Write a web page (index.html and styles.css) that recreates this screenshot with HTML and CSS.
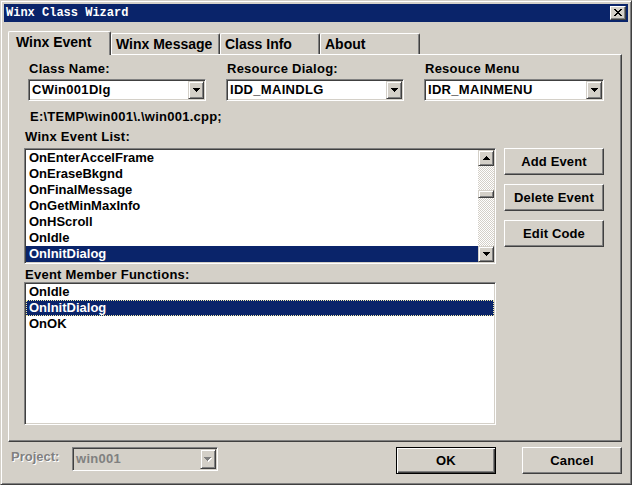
FILE: index.html
```html
<!DOCTYPE html>
<html>
<head>
<meta charset="utf-8">
<title>Winx Class Wizard</title>
<link rel="stylesheet" href="styles.css">
</head>
<body>
<div class="window">
  <div class="titlebar">
    <span class="title">Winx Class Wizard</span>
    <div class="close">
      <svg width="8" height="7" viewBox="0 0 8 7" shape-rendering="crispEdges"><g fill="#000"><rect x="0" y="0" width="2" height="1"/><rect x="6" y="0" width="2" height="1"/><rect x="1" y="1" width="2" height="1"/><rect x="5" y="1" width="2" height="1"/><rect x="2" y="2" width="4" height="1"/><rect x="3" y="3" width="2" height="1"/><rect x="2" y="4" width="4" height="1"/><rect x="1" y="5" width="2" height="1"/><rect x="5" y="5" width="2" height="1"/><rect x="0" y="6" width="2" height="1"/><rect x="6" y="6" width="2" height="1"/></g></svg>
    </div>
  </div>
  <div class="client">
    <div class="tabs">
      <div class="tab tab-event active">Winx Event</div>
      <div class="tab tab-message">Winx Message</div>
      <div class="tab tab-info">Class Info</div>
      <div class="tab tab-about">About</div>
    </div>
    <div class="panel">
      <div class="combos">
        <div class="group">
          <div class="label">Class Name:</div>
          <div class="combo"><span class="combo-text">CWin001Dlg</span><span class="drop"><svg width="7" height="4" viewBox="0 0 7 4" shape-rendering="crispEdges"><g fill="#000"><rect x="0" y="0" width="7" height="1"/><rect x="1" y="1" width="5" height="1"/><rect x="2" y="2" width="3" height="1"/><rect x="3" y="3" width="1" height="1"/></g></svg></span></div>
        </div>
        <div class="group">
          <div class="label">Resource Dialog:</div>
          <div class="combo"><span class="combo-text">IDD_MAINDLG</span><span class="drop"><svg width="7" height="4" viewBox="0 0 7 4" shape-rendering="crispEdges"><g fill="#000"><rect x="0" y="0" width="7" height="1"/><rect x="1" y="1" width="5" height="1"/><rect x="2" y="2" width="3" height="1"/><rect x="3" y="3" width="1" height="1"/></g></svg></span></div>
        </div>
        <div class="group">
          <div class="label">Resouce Menu</div>
          <div class="combo"><span class="combo-text">IDR_MAINMENU</span><span class="drop"><svg width="7" height="4" viewBox="0 0 7 4" shape-rendering="crispEdges"><g fill="#000"><rect x="0" y="0" width="7" height="1"/><rect x="1" y="1" width="5" height="1"/><rect x="2" y="2" width="3" height="1"/><rect x="3" y="3" width="1" height="1"/></g></svg></span></div>
        </div>
      </div>
      <div class="path">E:\TEMP\win001\.\win001.cpp;</div>
      <div class="main">
        <div class="lists">
          <div class="label list-label">Winx Event List:</div>
          <div class="listbox list-events">
            <div class="items">
              <div class="item">OnEnterAccelFrame</div>
              <div class="item">OnEraseBkgnd</div>
              <div class="item">OnFinalMessage</div>
              <div class="item">OnGetMinMaxInfo</div>
              <div class="item">OnHScroll</div>
              <div class="item">OnIdle</div>
              <div class="item selected">OnInitDialog</div>
            </div>
            <div class="vscroll">
              <div class="sbtn"><svg width="7" height="4" viewBox="0 0 7 4" shape-rendering="crispEdges"><g fill="#000"><rect x="3" y="0" width="1" height="1"/><rect x="2" y="1" width="3" height="1"/><rect x="1" y="2" width="5" height="1"/><rect x="0" y="3" width="7" height="1"/></g></svg></div>
              <div class="track"><div class="thumb"></div></div>
              <div class="sbtn"><svg width="7" height="4" viewBox="0 0 7 4" shape-rendering="crispEdges"><g fill="#000"><rect x="0" y="0" width="7" height="1"/><rect x="1" y="1" width="5" height="1"/><rect x="2" y="2" width="3" height="1"/><rect x="3" y="3" width="1" height="1"/></g></svg></div>
            </div>
          </div>
          <div class="label member-label">Event Member Functions:</div>
          <div class="listbox list-members">
            <div class="items">
              <div class="item">OnIdle</div>
              <div class="item selected focused">OnInitDialog</div>
              <div class="item">OnOK</div>
            </div>
          </div>
        </div>
        <div class="actions">
          <div class="btn">Add Event</div>
          <div class="btn">Delete Event</div>
          <div class="btn">Edit Code</div>
        </div>
      </div>
    </div>
    <div class="footer">
      <div class="project-label">Project:</div>
      <div class="combo combo-disabled"><span class="combo-text">win001</span><span class="drop"><svg width="8" height="5" viewBox="0 0 8 5" shape-rendering="crispEdges"><g fill="#fff"><rect x="1" y="1" width="7" height="1"/><rect x="2" y="2" width="5" height="1"/><rect x="3" y="3" width="3" height="1"/><rect x="4" y="4" width="1" height="1"/></g><g fill="#808080"><rect x="0" y="0" width="7" height="1"/><rect x="1" y="1" width="5" height="1"/><rect x="2" y="2" width="3" height="1"/><rect x="3" y="3" width="1" height="1"/></g></svg></span></div>
      <div class="btn btn-default">OK</div>
      <div class="btn btn-cancel">Cancel</div>
    </div>
  </div>
</div>
</body>
</html>
```

FILE: styles.css
```css
* { box-sizing: border-box; }
html, body { margin: 0; padding: 0; }
body {
  width: 632px;
  height: 485px;
  overflow: hidden;
  background: #d4d0c8;
  color: #000;
  font: bold 13px "Liberation Sans", Arial, sans-serif;
}
.window {
  width: 632px;
  height: 485px;
  border: 1px solid;
  border-color: #d4d0c8 #404040 #404040 #d4d0c8;
  box-shadow: inset 1px 1px #fff, inset -1px -1px #808080;
  padding: 3px;
  display: flex;
  flex-direction: column;
}
.titlebar {
  height: 18px;
  background: #0a246a;
  display: flex;
  align-items: center;
  justify-content: space-between;
  padding: 0 2px;
}
.title {
  color: #fff;
  font: bold 12px "Liberation Mono", "DejaVu Sans Mono", monospace;
  line-height: 18px;
}
.close {
  width: 16px;
  height: 14px;
  background: #d4d0c8;
  border: 1px solid;
  border-color: #fff #404040 #404040 #fff;
  box-shadow: inset -1px -1px #808080;
  display: flex;
  align-items: center;
  justify-content: center;
  padding-bottom: 1px;
}
.close svg { display: block; }
.client {
  flex: 1;
  padding: 9px 6px 0 4px;
  display: flex;
  flex-direction: column;
}
.tabs {
  display: flex;
  align-items: flex-end;
  height: 23px;
}
.tab {
  height: 21px;
  border-top: 1px solid #fff;
  border-left: 1px solid #fff;
  border-right: 1px solid #404040;
  border-top-left-radius: 2px;
  border-top-right-radius: 2px;
  box-shadow: inset -1px 0 #808080;
  padding: 2px 0 0 4px;
  font-size: 14px;
  line-height: 16px;
  white-space: nowrap;
  background: #d4d0c8;
}
.tab.active {
  height: 24px;
  margin-bottom: -1px;
  position: relative;
  z-index: 1;
  padding: 2px 0 0 7px;
}
.tab-event { width: 103px; }
.tab-message { width: 109px; }
.tab-info { width: 100px; }
.tab-about { width: 100px; }
.panel {
  width: 614px;
  height: 388px;
  border: 1px solid;
  border-color: #fff #404040 #404040 #fff;
  box-shadow: inset -1px -1px #808080;
}
.combos {
  display: grid;
  grid-template-columns: 178px 178px 180px;
  column-gap: 20px;
  padding: 6px 0 0 19px;
}
.label {
  line-height: 15px;
  height: 15px;
  padding-left: 1px;
  letter-spacing: 0.25px;
  white-space: nowrap;
}
.combo {
  margin-top: 3px;
  height: 22px;
  background: #fff;
  border: 1px solid;
  border-color: #808080 #fff #fff #808080;
  box-shadow: inset 1px 1px #404040, inset -1px -1px #d4d0c8;
  padding: 1px;
  display: flex;
  align-items: center;
}
.combo-text {
  flex: 1;
  padding-left: 2px;
  line-height: 16px;
  letter-spacing: 0.3px;
  white-space: nowrap;
}
.drop {
  width: 16px;
  height: 100%;
  background: #d4d0c8;
  border: 1px solid;
  border-color: #d4d0c8 #404040 #404040 #d4d0c8;
  box-shadow: inset 1px 1px #fff, inset -1px -1px #808080;
  display: flex;
  align-items: center;
  justify-content: center;
}
.drop svg, .sbtn svg { display: block; }
.path {
  margin-top: 8px;
  padding-left: 21px;
  line-height: 16px;
  height: 16px;
  letter-spacing: 0.25px;
}
.main {
  display: flex;
  margin-top: 4px;
  padding-left: 15px;
}
.lists { width: 472px; }
.listbox {
  background: #fff;
  border: 1px solid;
  border-color: #808080 #fff #fff #808080;
  box-shadow: inset 1px 1px #404040, inset -1px -1px #d4d0c8;
  padding: 1px;
  display: flex;
}
.list-events { margin-top: 4px; height: 116px; }
.member-label { margin-top: 3px; }
.list-members { height: 143px; }
.items { flex: 1; }
.item {
  height: 16px;
  line-height: 16px;
  padding-left: 3px;
  white-space: nowrap;
}
.item.selected { background: #0a246a; color: #fff; }
.item.focused {
  outline: 1px dotted #f2eca8;
  outline-offset: -1px;
}
.vscroll {
  width: 16px;
  display: flex;
  flex-direction: column;
}
.sbtn {
  width: 16px;
  height: 16px;
  background: #d4d0c8;
  border: 1px solid;
  border-color: #d4d0c8 #404040 #404040 #d4d0c8;
  box-shadow: inset 1px 1px #fff, inset -1px -1px #808080;
  display: flex;
  align-items: center;
  justify-content: center;
}
.track {
  flex: 1;
  background: repeating-conic-gradient(#fff 0 25%, #d4d0c8 0 50%) 0 0 / 2px 2px;
  padding-top: 24px;
}
.thumb {
  height: 8px;
  background: #d4d0c8;
  border: 1px solid;
  border-color: #d4d0c8 #404040 #404040 #d4d0c8;
  box-shadow: inset 1px 1px #fff, inset -1px -1px #808080;
}
.actions {
  margin-left: 8px;
  padding-top: 19px;
  display: flex;
  flex-direction: column;
  gap: 9px;
}
.btn {
  width: 100px;
  height: 27px;
  background: #d4d0c8;
  border: 1px solid;
  border-color: #fff #404040 #404040 #fff;
  box-shadow: inset -1px -1px #808080;
  display: flex;
  align-items: center;
  justify-content: center;
  line-height: 16px;
  letter-spacing: 0.15px;
  white-space: nowrap;
}
.footer {
  display: flex;
  align-items: flex-start;
  margin-top: 5px;
}
.project-label {
  width: 64px;
  margin-top: 2px;
  padding-left: 3px;
  line-height: 16px;
  color: #808080;
  text-shadow: 1px 1px #fff;
}
.combo.combo-disabled {
  margin-top: 0;
  width: 146px;
  height: 24px;
  background: #d4d0c8;
}
.combo-disabled .combo-text { color: #808080; }
.btn-default {
  margin-left: auto;
  border: 1px solid #000;
  box-shadow: inset 1px 1px #fff, inset -1px -1px #404040, inset -2px -2px #808080;
}
.btn-cancel { margin-left: 26px; }
```
